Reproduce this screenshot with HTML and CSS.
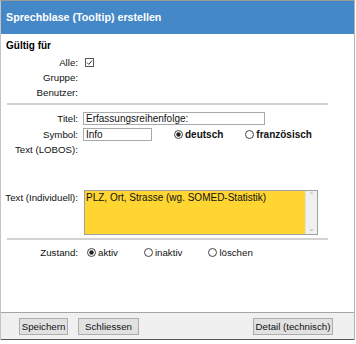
FILE: index.html
```html
<!DOCTYPE html>
<html lang="de">
<head>
  <meta charset="UTF-8">
  <title>Sprechblase (Tooltip) erstellen</title>
  <link rel="stylesheet" href="styles.css">
</head>
<body>
  <div class="dialog">
    <div class="titlebar">Sprechblase (Tooltip) erstellen</div>

    <div class="content">
      <div class="section-title">Gültig für</div>

      <div class="row">
        <span class="lbl">Alle:</span>
        <svg class="check" width="9" height="9" viewBox="0 0 9 9">
          <rect x="0.5" y="0.5" width="8" height="8" fill="#fff" stroke="#555"/>
          <path d="M2 4.6 L3.8 6.4 L7 2.6" fill="none" stroke="#333" stroke-width="1"/>
        </svg>
      </div>
      <div class="row"><span class="lbl">Gruppe:</span></div>
      <div class="row"><span class="lbl">Benutzer:</span></div>

      <div class="sep"></div>

      <div class="row tall">
        <span class="lbl">Titel:</span>
        <div class="field titel">Erfassungsreihenfolge:</div>
      </div>
      <div class="row tall">
        <span class="lbl">Symbol:</span>
        <div class="field symbol">Info</div>
        <span class="radio lang">
          <svg width="9" height="9" viewBox="0 0 9 9"><circle cx="4.5" cy="4.5" r="4" fill="#fff" stroke="#444"/><circle cx="4.5" cy="4.5" r="2.2" fill="#222"/></svg>
          <b>deutsch</b>
        </span>
        <span class="radio lang">
          <svg width="9" height="9" viewBox="0 0 9 9"><circle cx="4.5" cy="4.5" r="4" fill="#fff" stroke="#444"/></svg>
          <b>französisch</b>
        </span>
      </div>
      <div class="row"><span class="lbl">Text (LOBOS):</span></div>

      <div class="row area-row">
        <span class="lbl">Text (Individuell):</span>
        <div class="textarea">
          <div class="area-text">PLZ, Ort, Strasse (wg. SOMED-Statistik)</div>
          <div class="scroll">
            <span>&#8963;</span>
            <span>&#8964;</span>
          </div>
        </div>
      </div>

      <div class="sep"></div>

      <div class="row">
        <span class="lbl">Zustand:</span>
        <span class="radio state">
          <svg width="9" height="9" viewBox="0 0 9 9"><circle cx="4.5" cy="4.5" r="4" fill="#fff" stroke="#444"/><circle cx="4.5" cy="4.5" r="2.2" fill="#222"/></svg>
          aktiv
        </span>
        <span class="radio state">
          <svg width="9" height="9" viewBox="0 0 9 9"><circle cx="4.5" cy="4.5" r="4" fill="#fff" stroke="#444"/></svg>
          inaktiv
        </span>
        <span class="radio state">
          <svg width="9" height="9" viewBox="0 0 9 9"><circle cx="4.5" cy="4.5" r="4" fill="#fff" stroke="#444"/></svg>
          löschen
        </span>
      </div>
    </div>

    <div class="footer">
      <button class="btn save">Speichern</button>
      <button class="btn close">Schliessen</button>
      <button class="btn detail">Detail (technisch)</button>
    </div>
  </div>
</body>
</html>
```

FILE: styles.css
```css
body {
  margin: 0;
  font-family: "Liberation Sans", Arial, sans-serif;
  font-size: 9.7px;
  color: #111;
  background: #fff;
}

.dialog {
  width: 353px;
  border-top: 1px solid #9a9a9a;
  border-left: 1px solid #c4c4c4;
  border-right: 1px solid #b4b4b4;
}

.titlebar {
  height: 33px;
  line-height: 33px;
  padding-left: 5px;
  background: #4588c7;
  color: #fff;
  font-weight: bold;
  font-size: 10.7px;
}

.content {
  height: 278px;
  background: #fff;
}

.section-title {
  padding: 5px 0 0 5px;
  line-height: 13px;
  font-weight: bold;
  font-size: 10px;
  color: #000;
}

.row {
  display: flex;
  align-items: center;
  height: 15px;
}

.section-title + .row {
  margin-top: 3px;
}

.row.tall {
  height: 16px;
}

.lbl {
  width: 82px;
  box-sizing: border-box;
  padding-right: 5px;
  text-align: right;
  flex-shrink: 0;
}

.check {
  display: block;
  margin-left: 2px;
}

.sep {
  width: 321px;
  height: 2px;
  margin: 3px 0 5px 6px;
  background: #d2d2d2;
}

.field {
  height: 13px;
  box-sizing: border-box;
  border: 1px solid #a9a9a9;
  padding: 0 2px;
  font-size: 10px;
  line-height: 11px;
  background: #fff;
}

.field.titel {
  width: 182px;
}

.field.symbol {
  width: 69px;
}

.radio {
  display: flex;
  align-items: center;
  gap: 2px;
}

.radio svg {
  display: block;
}

.radio.lang {
  margin-left: 22px;
}

.radio.lang b {
  font-size: 10px;
}

.radio.state {
  margin-right: 26px;
}

.lbl + .radio.state {
  margin-left: 4px;
}

.area-row {
  height: auto;
  align-items: flex-start;
  margin-top: 33px;
}

.area-row .lbl {
  padding-top: 2px;
}

.textarea {
  display: flex;
  width: 234px;
  height: 45px;
  margin-left: 1px;
  box-sizing: border-box;
  border: 1px solid #a0a0a0;
  background: #fed531;
}

.area-text {
  flex: 1;
  padding: 1px;
  font-size: 10px;
  line-height: 12px;
}

.scroll {
  width: 11px;
  display: flex;
  flex-direction: column;
  justify-content: space-between;
  align-items: center;
  background: #f0f0f0;
  border-left: 1px solid #e4e4e4;
  color: #b0b0b0;
  font-size: 8px;
  line-height: 10px;
}

.footer {
  height: 26px;
  display: flex;
  align-items: center;
  padding-left: 18px;
  background: #f0f0f0;
  border-top: 1px solid #a5a5a5;
  border-bottom: 1px solid #555;
}

.btn {
  height: 17px;
  padding: 0;
  border: 1px solid #adadad;
  background: #e1e1e1;
  font-family: "Liberation Sans", Arial, sans-serif;
  font-size: 9.7px;
  color: #111;
}

.btn.save {
  width: 49px;
}

.btn.close {
  width: 61px;
  margin-left: 10px;
}

.btn.detail {
  width: 80px;
  margin-left: auto;
  margin-right: 21px;
}
```
